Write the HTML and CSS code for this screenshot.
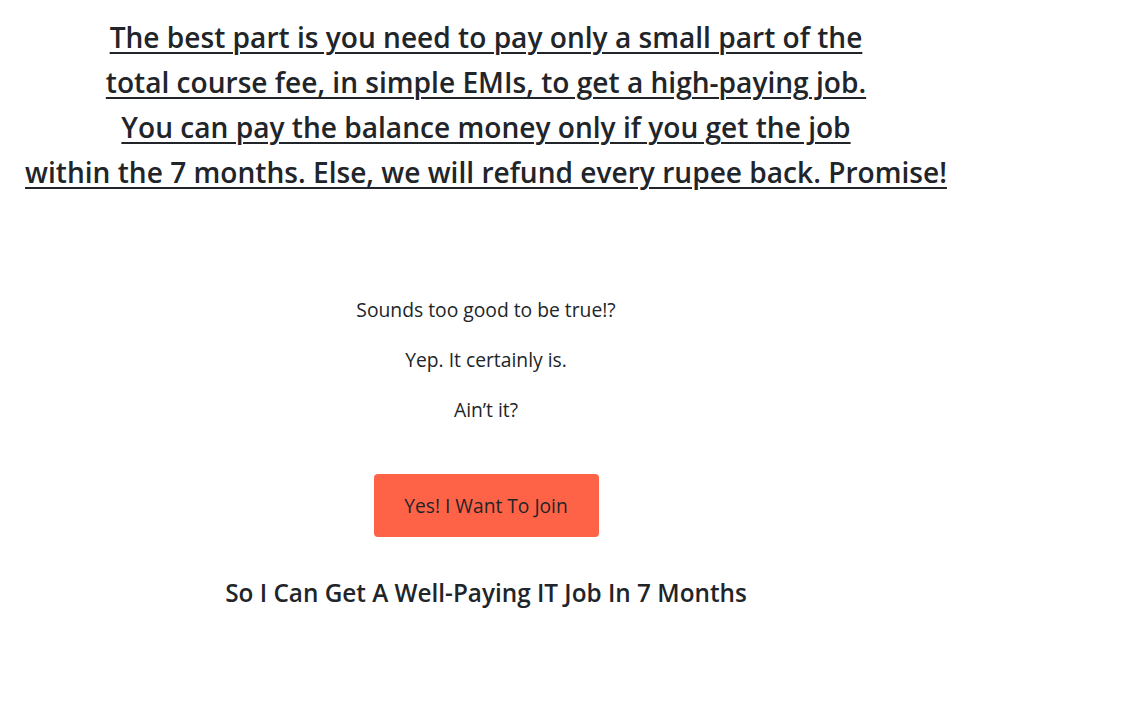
FILE: index.html
```html
<!DOCTYPE html>
<html lang="en">
<head>
<meta charset="utf-8">
<title>Join</title>
<link rel="stylesheet" href="styles.css">
</head>
<body>
<main class="page">
  <h2 class="headline"><u>The best part is you need to pay only a small part of the<br>total course fee, in simple EMIs, to get a high-paying job.<br>You can pay the balance money only if you get the job<br>within the 7 months. Else, we will refund every rupee back. Promise!</u></h2>
  <section class="pitch">
    <p>Sounds too good to be true!?</p>
    <p>Yep. It certainly is.</p>
    <p>Ain’t it?</p>
  </section>
  <a class="join-btn" href="#">Yes! I Want To Join</a>
  <h4 class="tagline">So I Can Get A Well-Paying IT Job In 7 Months</h4>
</main>
</body>
</html>
```
FILE: styles.css
```css
html, body {
  margin: 0;
  padding: 0;
  background: #fff;
}
body {
  font-family: "Open Sans", "Noto Sans", sans-serif;
  color: #212529;
}
.page {
  width: 972px;
  display: flex;
  flex-direction: column;
  align-items: center;
  text-align: center;
}
.headline {
  margin: 15px 0 0;
  font-size: 28.1px;
  font-weight: 600;
  line-height: 45px;
}
.headline u {
  text-decoration-thickness: 2px;
  text-underline-offset: 4px;
}
.pitch {
  margin-top: 100px;
}
.pitch p {
  margin: 0 0 20px;
  font-size: 19.3px;
  line-height: 30px;
}
.join-btn {
  margin-top: 29px;
  width: 225px;
  height: 63px;
  box-sizing: border-box;
  display: flex;
  align-items: center;
  justify-content: center;
  background: #ff6347;
  border-radius: 4px;
  color: #212529;
  text-decoration: none;
  font-size: 19.2px;
}
.tagline {
  margin: 39px 0 0;
  font-size: 24.3px;
  font-weight: 600;
  line-height: 34px;
}
```
